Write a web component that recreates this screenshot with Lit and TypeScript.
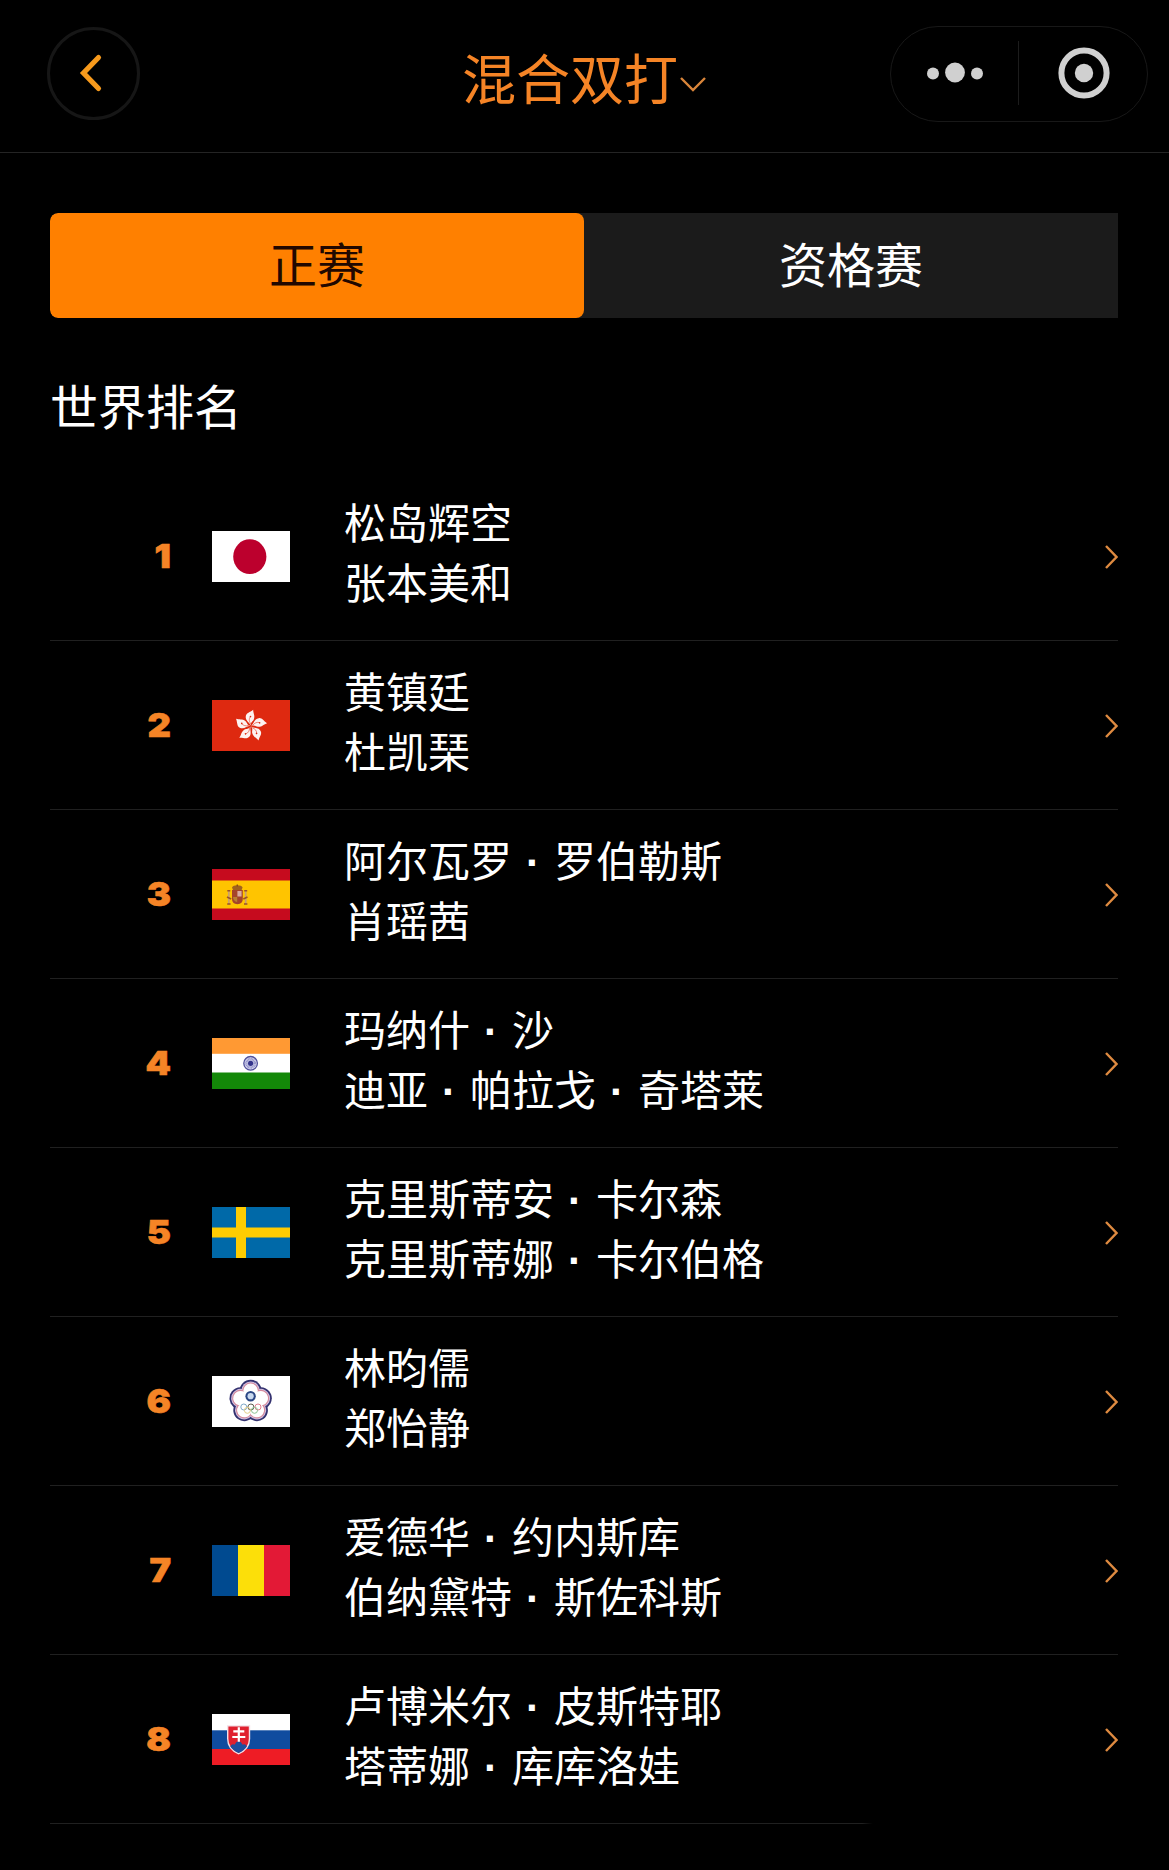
import { LitElement, html, svg, css } from "lit";
import { customElement, property, state } from "lit/decorators.js";

const petals = [0, 72, 144, 216, 288];

const flags: Record<string, unknown> = {
  jp: svg`<rect width="78" height="51" fill="#fff"/><ellipse cx="37.8" cy="25.7" rx="16.6" ry="17.4" fill="#bc002d"/>`,
  hk: svg`<rect width="78" height="51" fill="#de2910"/>
    ${petals.map((a) => svg`<g transform="translate(38.800 26) rotate(${a})">
      <path d="M0 -0.500C-1.500 -4 -5.800 -5.500 -5 -10C-4.300 -13.500 -1 -13.500 2.400 -16.300C2.200 -13 4.600 -10.500 3 -6.500C2.200 -4.500 -0.200 -4 0 -0.500Z" fill="#fff" fill-opacity="0.940"/>
      <path d="M0 -2 C-2 -5 -2 -7 -0.4 -9.6" stroke="#de2910" stroke-width="0.500" fill="none"/>
      <circle cx="-0.3" cy="-9.4" r="0.800" fill="#de2910"/></g>`)}`,
  es: svg`<rect width="78" height="51" fill="#c60b1e"/><rect y="11.5" width="78" height="28" fill="#ffc400"/>
    <path d="M20 18.5q1-2.2 5.300-2.200t5.300 2.200l-1 2.500h-8.600z" fill="#a0621e"/>
    <path d="M24.600 15.500h1.400v2h-1.400z" fill="#8a4a1a"/>
    <path d="M20 21h10.800v9q0 5-5.400 5.200q-5.400-.2-5.400-5.200z" fill="#a5442a"/>
    <path d="M25.400 22h4.200v5.500h-4.200z" fill="#d9a9a0"/><path d="M21 28h4.200v5q-4-.8-4.200-5z" fill="#b98030"/>
    <path d="M16.800 22v13M33.700 22v13" stroke="#c9a070" stroke-width="1.700"/>
    <path d="M15.300 21.700h3M32.200 21.700h3M15.200 35h3.400M32 35h3.400M15 28l4.200 2M35.500 28l-4.200 2" stroke="#9b5228" stroke-width="1.600"/>`,
  in: svg`<rect width="78" height="51" fill="#fff"/><rect width="78" height="15.800" fill="#ff9933"/><rect y="34.500" width="78" height="16.500" fill="#138808"/>
    <circle cx="38.600" cy="25.300" r="6.800" fill="#d9d9ef" stroke="#50509c" stroke-width="1.300"/>
    <circle cx="38.600" cy="25.300" r="4.200" fill="none" stroke="#8f8fc8" stroke-width="2.500" stroke-dasharray="0.800 0.500"/>
    <circle cx="38.600" cy="25.300" r="2.600" fill="#33338c"/>`,
  se: svg`<rect width="78" height="51" fill="#0069a8"/><path d="M24 0h10v51h-10zM0 20.500h78v10h-78z" fill="#fecc02"/>`,
  tpe: svg`<rect width="78" height="51" fill="#fff"/>
    <g fill="#33316f">${petals.map((a) => svg`<circle cx="38.600" cy="14.800" r="11" transform="rotate(${a} 38.600 25.500)"/>`)}</g>
    <g fill="#cfc0e0">${petals.map((a) => svg`<circle cx="38.600" cy="14.800" r="9.300" transform="rotate(${a} 38.600 25.500)"/>`)}</g>
    <g fill="#d68a9c">${petals.map((a) => svg`<circle cx="38.600" cy="14.800" r="8.300" transform="rotate(${a} 38.600 25.500)"/>`)}</g>
    <g fill="#fff">${petals.map((a) => svg`<circle cx="38.600" cy="14.800" r="7.200" transform="rotate(${a} 38.600 25.500)"/>`)}<circle cx="38.600" cy="25.500" r="10"/></g>
    <circle cx="38.600" cy="20.200" r="5.200" fill="#2b4785"/><circle cx="38.600" cy="20.200" r="3.100" fill="#c9d9ef"/>
    <g fill="none" stroke-width="1"><circle cx="31.800" cy="31" r="3" stroke="#7fa9c9"/><circle cx="38.900" cy="31" r="3" stroke="#5d5d4d"/><circle cx="46" cy="31" r="3" stroke="#e08090"/>
    <circle cx="35.400" cy="34.300" r="3" stroke="#e3cf8a"/><circle cx="42.500" cy="34.300" r="3" stroke="#8dc393"/></g>`,
  ro: svg`<rect width="26.500" height="51" fill="#004a90"/><rect x="26" width="26.500" height="51" fill="#fcdf09"/><rect x="52" width="26" height="51" fill="#e31936"/>`,
  sk: svg`<rect width="78" height="51" fill="#fff"/><rect y="16.300" width="78" height="18.900" fill="#104c9f"/><rect y="35" width="78" height="16" fill="#ee1c25"/>
    <path d="M15 11.200h23.200v13.500q0 11-11.600 15.700q-11.600-4.700-11.600-15.700z" fill="#f3dfe6"/>
    <path d="M16.400 12.500h20.400v12.200q0 9.800-10.200 14.200q-10.200-4.400-10.200-14.200z" fill="#e0202f"/>
    <path d="M18.300 32.200q2-3 4.200-1.500q2-3.400 4.100-3.400t4.100 3.400q2.200-1.500 4.200 1.500q-2.400 4.300-8.300 6.700q-5.900-2.400-8.300-6.700z" fill="#1c4f9f"/>
    <path d="M26.800 13.200v14.600M21.300 17.400h11M20.300 23h13" stroke="#fff" stroke-width="2.200"/>`,
};

interface Pair {
  rank: number;
  flag: string;
  names: string[];
}

const pairs: Pair[] = [
  { rank: 1, flag: "jp", names: ["松岛辉空", "张本美和"] },
  { rank: 2, flag: "hk", names: ["黄镇廷", "杜凯琹"] },
  { rank: 3, flag: "es", names: ["阿尔瓦罗·罗伯勒斯", "肖瑶茜"] },
  { rank: 4, flag: "in", names: ["玛纳什·沙", "迪亚·帕拉戈·奇塔莱"] },
  { rank: 5, flag: "se", names: ["克里斯蒂安·卡尔森", "克里斯蒂娜·卡尔伯格"] },
  { rank: 6, flag: "tpe", names: ["林昀儒", "郑怡静"] },
  { rank: 7, flag: "ro", names: ["爱德华·约内斯库", "伯纳黛特·斯佐科斯"] },
  { rank: 8, flag: "sk", names: ["卢博米尔·皮斯特耶", "塔蒂娜·库库洛娃"] },
];

@customElement("nav-header")
export class NavHeader extends LitElement {
  static styles = css`
    :host { display: block; }
    .bar {
      box-sizing: border-box;
      height: 153px;
      padding: 26px 21px 0;
      border-bottom: 1px solid #242424;
      display: grid;
      grid-template-columns: 1fr auto 1fr;
      align-items: start;
    }
    .back {
      box-sizing: border-box;
      width: 93px;
      height: 93px;
      margin: 1px 0 0 26px;
      border: 3px solid #161616;
      border-radius: 50%;
      display: flex;
      align-items: center;
      justify-content: center;
      padding: 0 8px 2px 0;
    }
    .title {
      display: flex;
      align-items: center;
      height: 102px;
      color: #f58426;
      font-size: 54px;
      line-height: 80px;
    }
    .caret { margin: 15px 0 0 1px; }
    .capsule {
      box-sizing: border-box;
      justify-self: end;
      width: 258px;
      height: 96px;
      border: 1px solid #181818;
      border-radius: 48px;
      display: flex;
      align-items: center;
    }
    .slot { flex: 1; display: flex; justify-content: center; padding: 0 0 2px 2px; }
    .slot:first-child { padding-left: 1px; }
    .rule { width: 1px; height: 64px; background: #1c1c1c; margin-bottom: 3px; }
  `;
  render() {
    return html`<div class="bar">
      <div class="back">
        <svg width="26" height="40" viewBox="0 0 26 40" fill="none" stroke="#f79a1c" stroke-width="5.200" stroke-linecap="round" stroke-linejoin="miter"><path d="M21.500 4.500 6.500 20l15 15.500"/></svg>
      </div>
      <div class="title"><span>混合双打</span>
        <svg class="caret" width="28" height="18" viewBox="0 0 28 18" fill="none" stroke="#d9853a" stroke-width="2.400"><path d="M2 2l12 12L26 2"/></svg>
      </div>
      <div class="capsule">
        <div class="slot"><svg width="60" height="24" viewBox="0 0 60 24" fill="#d0d0d0"><circle cx="8" cy="12.500" r="6"/><circle cx="30" cy="11.500" r="9.900"/><circle cx="52" cy="12.500" r="6"/></svg></div>
        <div class="rule"></div>
        <div class="slot"><svg width="54" height="54" viewBox="0 0 54 54"><circle cx="27" cy="27" r="22.600" fill="none" stroke="#d0d0d0" stroke-width="6"/><circle cx="27" cy="27" r="9.200" fill="#d0d0d0"/></svg></div>
      </div>
    </div>`;
  }
}

@customElement("stage-tabs")
export class StageTabs extends LitElement {
  @state() private active = 0;
  static styles = css`
    :host { display: block; }
    .tabs {
      display: flex;
      height: 105px;
      background: #1b1b1b;
      border-radius: 8px 0 0 8px;
      overflow: hidden;
    }
    .tab {
      flex: 1;
      border: 0;
      padding: 0 0 8px;
      background: none;
      color: #fff;
      font: inherit;
      font-size: 48px;
    }
    .on { background: #ff8000; color: #210800; border-radius: 8px; }
  `;
  render() {
    return html`<div class="tabs">
      ${["正赛", "资格赛"].map((t, i) => html`<button class="tab ${i === this.active ? "on" : ""}" @click=${() => (this.active = i)}>${t}</button>`)}
    </div>`;
  }
}

@customElement("rank-row")
export class RankRow extends LitElement {
  @property({ attribute: false }) pair!: Pair;
  static styles = css`
    :host { display: block; }
    .row {
      box-sizing: border-box;
      height: 169px;
      display: grid;
      grid-template-columns: 121px 78px 1fr 14px;
      align-items: center;
    }
    .rank {
      font: 900 33px/51px Inter, "Liberation Sans", sans-serif;
      color: #f58426;
      text-align: right;
      transform: scaleX(1.1);
      transform-origin: right;
      -webkit-text-stroke: 0.6px #f58426;
    }
    .flag { display: block; margin-left: 41px; }
    .names { margin: 0 0 12px 95px; font-size: 42px; line-height: 60px; }
    .name { white-space: nowrap; height: 60px; }
    .dot {
      display: inline-block;
      width: 42px;
      text-align: center;
      font-family: "Liberation Sans", sans-serif;
      font-weight: 700;
      line-height: 1;
    }
    .go { display: block; }
  `;
  render() {
    const { rank, flag, names } = this.pair;
    return html`<div class="row">
      <div class="rank">${rank}</div>
      <svg class="flag" width="78" height="51" viewBox="0 0 78 51">${flags[flag]}</svg>
      <div class="names">${names.map((n) => html`<div class="name">${n.split("·").map((part, i) => html`${i ? html`<span class="dot">·</span>` : ""}${part}`)}</div>`)}</div>
      <svg class="go" width="14" height="26" viewBox="0 0 14 26" fill="none" stroke="#de8a40" stroke-width="2.400"><path d="M2 2l10.500 11L2 24"/></svg>
    </div>`;
  }
}

@customElement("app-root")
export class AppRoot extends LitElement {
  static styles = css`
    :host {
      display: block;
      height: 1870px;
      overflow: hidden;
      background: #000;
      color: #fff;
      font-family: "Noto Sans CJK SC", sans-serif;
    }
    .content { padding: 60px 51px 0 50px; }
    .heading { margin: 0; padding-top: 51px; height: 103px; font-size: 48px; line-height: 70px; font-weight: 400; }
    .item { display: block; border-bottom: 1px solid #202020; height: 168px; }
    .item:last-child { border-image: linear-gradient(90deg, #202020 76%, transparent 77%) 1; }
  `;
  render() {
    return html`<nav-header></nav-header>
      <main class="content">
        <stage-tabs></stage-tabs>
        <h2 class="heading">世界排名</h2>
        <div>${pairs.map((p) => html`<rank-row class="item" .pair=${p}></rank-row>`)}</div>
      </main>`;
  }
}
